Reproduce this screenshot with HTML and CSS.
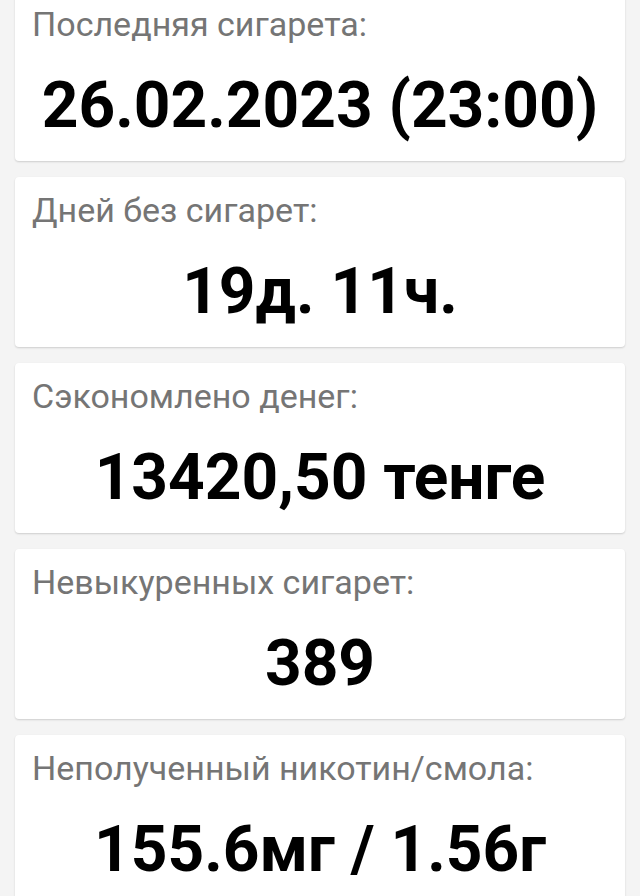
FILE: index.html
```html
<!DOCTYPE html>
<html lang="ru">
<head>
    <meta charset="utf-8">
    <meta name="viewport" content="width=device-width, initial-scale=1.0">
    <title>Статистика</title>
    <link rel="stylesheet" href="styles.css">
</head>
<body>
    <main class="stats-list">
        <section class="stat-card">
            <p class="stat-label">Последняя сигарета:</p>
            <p class="stat-value">26.02.2023 (23:00)</p>
        </section>
        <section class="stat-card">
            <p class="stat-label">Дней без сигарет:</p>
            <p class="stat-value">19д. 11ч.</p>
        </section>
        <section class="stat-card">
            <p class="stat-label">Сэкономлено денег:</p>
            <p class="stat-value">13420,50 тенге</p>
        </section>
        <section class="stat-card">
            <p class="stat-label">Невыкуренных сигарет:</p>
            <p class="stat-value">389</p>
        </section>
        <section class="stat-card">
            <p class="stat-label">Неполученный никотин/смола:</p>
            <p class="stat-value">155.6мг / 1.56г</p>
        </section>
    </main>
</body>
</html>
```

FILE: styles.css
```css
:root {
    --background: #f4f4f4;
    --card: #ffffff;
    --label: #757575;
    --value: #000000;
    --shadow: 0 1px 2px rgba(0, 0, 0, 0.16);
}

* {
    margin: 0;
    padding: 0;
    box-sizing: border-box;
}

body {
    font-family: Roboto, 'Noto Sans', sans-serif;
    background: var(--background);
    min-height: 100vh;
    overflow: hidden;
}

/* list is scrolled a little, so the first card is cut at the top */
.stats-list {
    display: flex;
    flex-direction: column;
    gap: 16px;
    margin-top: -9px;
    padding: 0 15px 16px;
}

.stat-card {
    background: var(--card);
    border-radius: 4px;
    box-shadow: var(--shadow);
    padding: 13px 17px 19px;
}

.stat-label {
    font-size: 34px;
    line-height: 40px;
    color: var(--label);
}

.stat-value {
    margin-top: 26px;
    font-size: 64px;
    line-height: 72px;
    font-weight: 700;
    color: var(--value);
    text-align: center;
    white-space: nowrap;
}
```
